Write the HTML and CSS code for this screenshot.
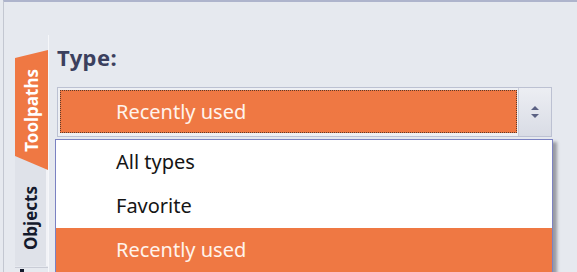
FILE: index.html
```html
<!DOCTYPE html>
<html lang="en">
<head>
    <meta charset="UTF-8">
    <title>Toolpaths - Type</title>
    <link rel="stylesheet" href="styles.css">
</head>
<body>
    <div class="panel">
        <div class="tabs">
            <div class="tab tab-active"><span>Toolpaths</span></div>
            <div class="tab tab-objects"><span>Objects</span></div>
            <div class="tab tab-next"><i class="tab-mark"></i></div>
        </div>
        <div class="content">
            <div class="label">Type:</div>
            <div class="combo">
                <div class="combo-value"><span>Recently used</span></div>
                <div class="combo-btn">
                    <svg width="10" height="14" viewBox="0 0 10 14">
                        <path d="M1 5 L5 1 L9 5 Z" fill="#5b6183"/>
                        <path d="M1 9 L5 13 L9 9 Z" fill="#5b6183"/>
                    </svg>
                </div>
            </div>
            <ul class="list">
                <li>All types</li>
                <li>Favorite</li>
                <li class="selected">Recently used</li>
            </ul>
        </div>
    </div>
</body>
</html>
```

FILE: styles.css
```css
body {
    margin: 0;
    background-color: #e6e9ef;
    font-family: "Noto Sans", "Open Sans", sans-serif;
    overflow: hidden;
}
.panel {
    display: flex;
    height: 270px;
    margin-left: 3px;
    border-top: 2px solid #aeb4cc;
    border-left: 1px solid #c3c7d1;
    overflow: hidden;
}
.tabs {
    width: 33px;
    margin-left: 11px;
    margin-top: 33px;
    padding-top: 15px;
    border-right: 1px solid #f6f7fa;
    display: flex;
    flex-direction: column;
    overflow: hidden;
}
.tab {
    flex-shrink: 0;
    display: flex;
    align-items: center;
    justify-content: center;
    font-weight: bold;
    font-size: 17px;
}
.tab span {
    writing-mode: vertical-rl;
    transform: rotate(180deg);
}
.tab-active {
    height: 120px;
    background-color: #ef7843;
    color: #fff;
    clip-path: polygon(0 8px, 100% 0, 100% 100%, 0 calc(100% - 14px));
    position: relative;
    z-index: 1;
}
.tab-objects {
    height: 110px;
    margin-top: -14px;
    padding-top: 14px;
    box-sizing: border-box;
    background-color: #dfe2e9;
    color: #141a2c;
    border-right: 2px solid #f2f3f7;
}
.tab-next {
    height: 30px;
    margin-top: 1px;
    align-items: flex-start;
    justify-content: flex-start;
    border-top: 1px solid #c9ccd6;
}
.tab-mark {
    width: 4px;
    height: 10px;
    margin: 1px 0 0 5px;
    background-color: #141a2c;
}
.content {
    margin-left: 8px;
    width: 500px;
}
.label {
    margin-top: 43px;
    font-size: 22px;
    font-weight: bold;
    letter-spacing: 0.4px;
    color: #3b405e;
    line-height: 24px;
}
.combo {
    display: flex;
    margin-top: 18px;
    width: 495px;
    height: 50px;
    box-sizing: border-box;
    border: 1px solid #bcc1d2;
    background-color: #eef0f4;
}
.combo-value {
    flex: 1;
    margin: 2px 0 3px 2px;
    background-color: #ef7843;
    border: 1px dotted #5e3a2a;
    display: flex;
    align-items: center;
    padding-left: 55px;
    color: #fff3ec;
    font-size: 20px;
}
.combo-btn {
    width: 32px;
    margin-left: 1px;
    display: flex;
    align-items: center;
    justify-content: center;
    background: linear-gradient(#eceef3, #d9dce5);
    border-left: 1px solid #c7cbd8;
}
.list {
    list-style: none;
    margin: 2px 0 0 -2px;
    padding: 0;
    width: 496px;
    height: 140px;
    background-color: #fff;
    border: 1px solid #7b82c2;
    box-shadow: 4px 3px 3px rgba(60, 60, 70, 0.45);
}
.list li {
    height: 44px;
    line-height: 44px;
    padding-left: 60px;
    font-size: 20px;
    color: #151515;
}
.list li.selected {
    background-color: #ef7843;
    color: #fff3ec;
}
```
